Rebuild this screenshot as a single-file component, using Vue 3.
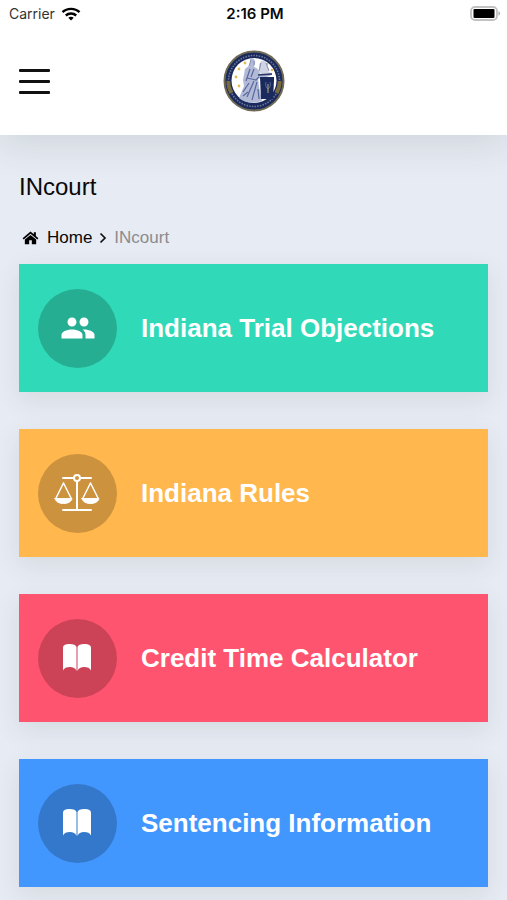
<template>
  <div class="app">
    <div class="top">
      <div class="status-bar">
        <div class="carrier">
          <span>Carrier</span>
          <svg width="20" height="14" viewBox="0 0 20 14" fill="none" stroke="#000" stroke-width="2.4" aria-hidden="true">
            <path d="M1.500 5.200C6 .7 14 .7 18.500 5.200" />
            <path d="M4.800 8.500c2.900-2.700 7.500-2.700 10.400 0" />
            <path d="M7.300 10.700c1.600-1.400 3.800-1.400 5.400 0L10 13.600z" fill="#000" stroke="none" />
          </svg>
        </div>
        <span class="time">2:16 PM</span>
        <svg class="battery" width="31" height="16" viewBox="0 0 31 16" aria-hidden="true">
          <rect x="1" y="1" width="26" height="13" rx="4" fill="#fff" stroke="#c2c2c2" stroke-width="1.800" />
          <rect x="3.500" y="3" width="21" height="9" rx="1" fill="#000" />
          <path d="M28.500 5.300c2 .7 2 3.700 0 4.400z" fill="#aaa" />
        </svg>
      </div>
      <header class="nav-bar">
        <button class="menu-btn" type="button" aria-label="Open menu">
          <span /><span /><span />
        </button>
        <svg class="seal" viewBox="0 0 62 62" role="img" aria-label="Seal">
          <circle cx="31" cy="31" r="29.500" fill="#1b2a5c" stroke="#6f6a55" stroke-width="2" />
          <circle cx="31" cy="31" r="25.500" fill="none" stroke="#6d7699" stroke-width="1.600" stroke-dasharray="1.500 1.200" />
          <path d="M5.500 31c-.5 4 1 8 3 12M56.500 31c.5 4-1 8-3 12" fill="none" stroke="#776b3f" stroke-width="4" />
          <circle cx="31" cy="30.500" r="22.500" fill="#fff" />
          <g fill="#e6bd52">
            <circle cx="22" cy="13" r="1.400" /><circle cx="16" cy="19" r="1.400" />
            <circle cx="13" cy="27" r="1.400" /><circle cx="16" cy="36" r="1.400" />
            <circle cx="44" cy="14" r="1.300" /><circle cx="49" cy="20" r="1.300" />
          </g>
          <path d="M27 9c3-2 6 1 5 5l-1 3c4 1 5 4 6 7l6-2 6 1v2l-11 4-3-1 1 9 3 14c-8 3-18 2-23-3l5-12-1-6 2-11 5-4z" fill="#b2bad6" />
          <path d="M36 15c1-4 4-6 7-3l3 8-1 4-9-1z" fill="#d0d4e4" />
          <path d="M27 19l-4 12M31 19l-3 8M24 28l9 2 3-3M31 31l-7 16M34 32l-5 18M35 39l1 10M20 42l6-9M20 46l5-4" fill="none" stroke="#5868a0" stroke-width="1.200" />
          <path d="M28 10l-2 6M31 11v4M38 13l-2 8M43 13l3 8" fill="none" stroke="#8790b5" />
          <path d="M35 25l14-1" stroke="#293664" stroke-width="1.500" />
          <path d="M37 27h14v4l-1 18H38z" fill="#1b2a5c" />
          <path d="M43 32c-1 3 0 6 2 7 2-1 3-4 2-7" fill="none" stroke="#5266a5" />
          <path d="M45 34v9" stroke="#a29a65" stroke-width="1.200" />
        </svg>
      </header>
    </div>

    <main class="content">
      <h1>INcourt</h1>
      <nav class="breadcrumb" aria-label="Breadcrumb">
        <a href="#home">
          <svg width="17" height="16" viewBox="0 0 18 16" aria-hidden="true">
            <path d="M9 1L.6 8.200l1.200 1.300L9 3.500l7.200 6 1.200-1.300-2.700-2.400V1.800h-2.200v2.100z" />
            <path d="M9 4.800L3 9.700v4.800h4.600v-4h2.800v4H15V9.700z" />
          </svg>
          <span>Home</span>
        </a>
        <svg class="chevron" width="8" height="12" viewBox="0 0 8 12" aria-hidden="true">
          <path d="M1.500 1.500L6 6l-4.500 4.500" fill="none" stroke="#111" stroke-width="1.700" />
        </svg>
        <span class="current">INcourt</span>
      </nav>

      <div class="cards">
        <a v-for="item in items" :key="item.label" :href="item.href" class="card" :class="item.color">
          <span class="icon">
            <svg v-if="item.icon === 'people'" width="36" height="36" viewBox="0 0 24 24" fill="#fff" aria-hidden="true">
              <path d="M16 11c1.660 0 2.990-1.340 2.990-3S17.660 5 16 5s-3 1.340-3 3 1.340 3 3 3zm-8 0c1.660 0 2.990-1.340 2.990-3S9.660 5 8 5 5 6.340 5 8s1.340 3 3 3zm0 2c-2.330 0-7 1.170-7 3.500V19h14v-2.500c0-2.330-4.670-3.500-7-3.500zm8 0c-.29 0-.62.02-.97.05 1.160.84 1.970 1.970 1.970 3.450V19h6v-2.500c0-2.330-4.670-3.500-7-3.500z" />
            </svg>
            <svg v-else-if="item.icon === 'scales'" width="48" height="40" viewBox="0 0 48 40" fill="none" stroke="#fff" stroke-width="2" stroke-linecap="round" stroke-linejoin="round" aria-hidden="true">
              <path d="M9 5h10M27 5h10M9 37h28M23 8v29" />
              <circle cx="23" cy="5" r="3" />
              <path d="M9.500 10L2 25M9.500 10L17 25M36.500 10L29 25M36.500 10L44 25" stroke-width="1.500" />
              <path d="M1 25.500h17c-.5 3-4 5-8.500 5S1.500 28.500 1 25.500zM28 25.500h17c-.5 3-4 5-8.500 5s-8-2-8.500-5z" fill="#fff" stroke-width="1" />
            </svg>
            <svg v-else width="32" height="32" viewBox="0 0 32 32" fill="#fff" aria-hidden="true">
              <path d="M1 6c0-3 2.500-4 6.500-4S14 3 14.500 5v24c-1-3-3.500-4-6.500-4-3.500 0-6 1-7 3.500z" />
              <path d="M29 6c0-3-2.500-4-6.500-4S16 3 15.500 5v24c1-3 3.500-4 6.500-4 3.500 0 6 1 7 3.500z" />
            </svg>
          </span>
          <span class="label">{{ item.label }}</span>
        </a>
      </div>
    </main>
  </div>
</template>

<script setup>
const items = [
  { label: 'Indiana Trial Objections', icon: 'people', color: 'green',  href: '#objections' },
  { label: 'Indiana Rules',            icon: 'scales', color: 'orange', href: '#rules' },
  { label: 'Credit Time Calculator',   icon: 'book',   color: 'red',    href: '#credit-time' },
  { label: 'Sentencing Information',   icon: 'book',   color: 'blue',   href: '#sentencing' },
]
</script>

<style>
body { background: #e7ebf3; }
</style>

<style scoped>
.app {
  font-family: "Liberation Sans", Arial, sans-serif;
  color: #080808;
}

.top {
  background: #fff;
  box-shadow: 0 8px 36px rgba(60, 75, 75, 0.14);
}

.status-bar {
  display: grid;
  grid-template-columns: 1fr auto 1fr;
  align-items: center;
  height: 27px;
  padding: 0 6px 0 9px;
  font-family: Inter, sans-serif;
  font-size: 14px;
}

.carrier {
  display: flex;
  align-items: center;
  gap: 6px;
  color: #333;
}

.time {
  font-size: 15px;
  font-weight: 600;
}

.battery { justify-self: end; }

.nav-bar {
  display: grid;
  grid-template-columns: 1fr auto 1fr;
  align-items: center;
  height: 108px;
  padding: 0 19px;
  box-sizing: border-box;
}

.menu-btn {
  display: flex;
  flex-direction: column;
  justify-content: space-between;
  width: 31px;
  height: 25px;
  padding: 0;
  border: 0;
  background: none;
  cursor: pointer;
}

.menu-btn span {
  height: 3px;
  border-radius: 1px;
  background: #111;
}

.seal {
  width: 62px;
  height: 62px;
}

.content { padding: 37px 19px 14px; }

h1 {
  margin: 0;
  font-size: 24px;
  font-weight: 400;
  line-height: 30px;
}

.breadcrumb {
  display: flex;
  align-items: center;
  gap: 7px;
  margin: 26px 0 16px;
  padding-left: 3px;
  font-size: 17px;
  line-height: 20px;
}

.breadcrumb a {
  display: flex;
  align-items: center;
  gap: 8px;
  color: inherit;
  text-decoration: none;
}

.current { color: #8b8b8d; }

.cards {
  display: flex;
  flex-direction: column;
  gap: 37px;
}

.card {
  display: flex;
  align-items: center;
  gap: 24px;
  height: 128px;
  padding: 0 19px;
  box-sizing: border-box;
  color: #fff;
  text-decoration: none;
  box-shadow: 0 8px 24px rgba(60, 75, 75, 0.1);
}

.green  { background: #30dab8; }
.orange { background: #ffb74e; }
.red    { background: #ff546f; }
.blue   { background: #4297ff; }

.icon {
  display: flex;
  flex-shrink: 0;
  align-items: center;
  justify-content: center;
  width: 79px;
  height: 79px;
  border-radius: 50%;
  background: rgba(0, 0, 0, 0.2);
}

.label {
  font-size: 26px;
  font-weight: 700;
  line-height: 32px;
}
</style>
